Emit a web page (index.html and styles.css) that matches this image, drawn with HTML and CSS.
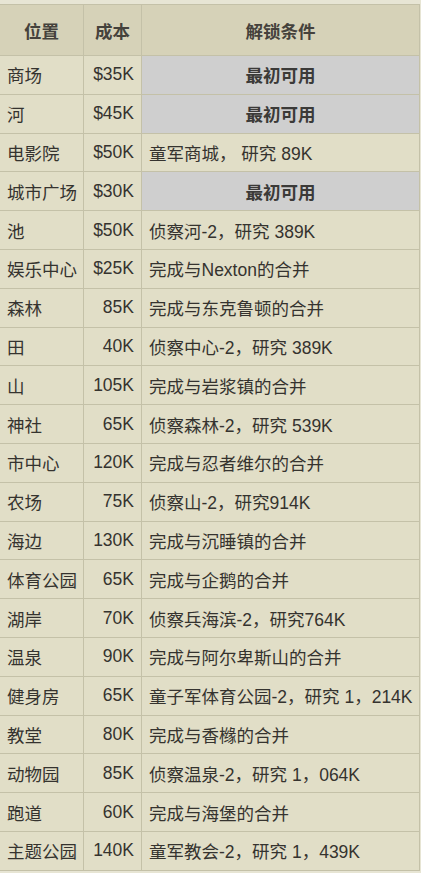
FILE: index.html
```html
<!DOCTYPE html>
<html lang="zh">
<head>
<meta charset="utf-8">
<link rel="stylesheet" href="styles.css">
</head>
<body>
<table class="unlock">
  <colgroup>
    <col class="c-loc">
    <col class="c-cost">
    <col class="c-cond">
  </colgroup>
  <thead>
    <tr class="head-row">
      <th>位置</th>
      <th>成本</th>
      <th>解锁条件</th>
    </tr>
  </thead>
  <tbody>
    <tr><td class="loc">商场</td><td class="cost">$35K</td><td class="cond na">最初可用</td></tr>
    <tr><td class="loc">河</td><td class="cost">$45K</td><td class="cond na">最初可用</td></tr>
    <tr><td class="loc">电影院</td><td class="cost">$50K</td><td class="cond">童军商城， 研究 89K</td></tr>
    <tr><td class="loc">城市广场</td><td class="cost">$30K</td><td class="cond na">最初可用</td></tr>
    <tr><td class="loc">池</td><td class="cost">$50K</td><td class="cond">侦察河-2，研究 389K</td></tr>
    <tr><td class="loc">娱乐中心</td><td class="cost">$25K</td><td class="cond">完成与Nexton的合并</td></tr>
    <tr><td class="loc">森林</td><td class="cost">85K</td><td class="cond">完成与东克鲁顿的合并</td></tr>
    <tr><td class="loc">田</td><td class="cost">40K</td><td class="cond">侦察中心-2，研究 389K</td></tr>
    <tr><td class="loc">山</td><td class="cost">105K</td><td class="cond">完成与岩浆镇的合并</td></tr>
    <tr><td class="loc">神社</td><td class="cost">65K</td><td class="cond">侦察森林-2，研究 539K</td></tr>
    <tr><td class="loc">市中心</td><td class="cost">120K</td><td class="cond">完成与忍者维尔的合并</td></tr>
    <tr><td class="loc">农场</td><td class="cost">75K</td><td class="cond">侦察山-2，研究914K</td></tr>
    <tr><td class="loc">海边</td><td class="cost">130K</td><td class="cond">完成与沉睡镇的合并</td></tr>
    <tr><td class="loc">体育公园</td><td class="cost">65K</td><td class="cond">完成与企鹅的合并</td></tr>
    <tr><td class="loc">湖岸</td><td class="cost">70K</td><td class="cond">侦察兵海滨-2，研究764K</td></tr>
    <tr><td class="loc">温泉</td><td class="cost">90K</td><td class="cond">完成与阿尔卑斯山的合并</td></tr>
    <tr><td class="loc">健身房</td><td class="cost">65K</td><td class="cond">童子军体育公园-2，研究 1，214K</td></tr>
    <tr><td class="loc">教堂</td><td class="cost">80K</td><td class="cond">完成与香橼的合并</td></tr>
    <tr><td class="loc">动物园</td><td class="cost">85K</td><td class="cond">侦察温泉-2，研究 1，064K</td></tr>
    <tr><td class="loc">跑道</td><td class="cost">60K</td><td class="cond">完成与海堡的合并</td></tr>
    <tr><td class="loc">主题公园</td><td class="cost">140K</td><td class="cond">童军教会-2，研究 1，439K</td></tr>
  </tbody>
</table>
</body>
</html>
```

FILE: styles.css
```css
html, body {
  margin: 0;
  padding: 0;
  background: #e7e5d4;
}

body {
  padding-top: 4px;
  font-family: "Liberation Sans", "Noto Sans CJK SC", sans-serif;
  font-size: 17.5px;
  color: #35332f;
}

.unlock {
  border-collapse: collapse;
  table-layout: fixed;
  width: 420px;
  margin-left: -1px;
  background: #e1dec7;
}

.c-loc { width: 84px; }
.c-cost { width: 58px; }
.c-cond { width: 278px; }

.unlock th,
.unlock td {
  border: 1px solid #c4c1a8;
  padding: 0 7px;
  white-space: nowrap;
  overflow: hidden;
  vertical-align: middle;
}

.head-row {
  height: 51px;
  background: #d6d2b8;
}

.unlock th {
  font-weight: 700;
  color: #45423c;
  text-align: center;
  padding-top: 1px;
}

.unlock tbody tr {
  height: 38.8px;
}

.loc {
  text-align: left;
}

.cost {
  text-align: right;
}

.cond {
  text-align: left;
}

.cond.na {
  text-align: center;
  background: #cfcfcf;
  font-weight: 700;
  color: #3b3a38;
}
```
